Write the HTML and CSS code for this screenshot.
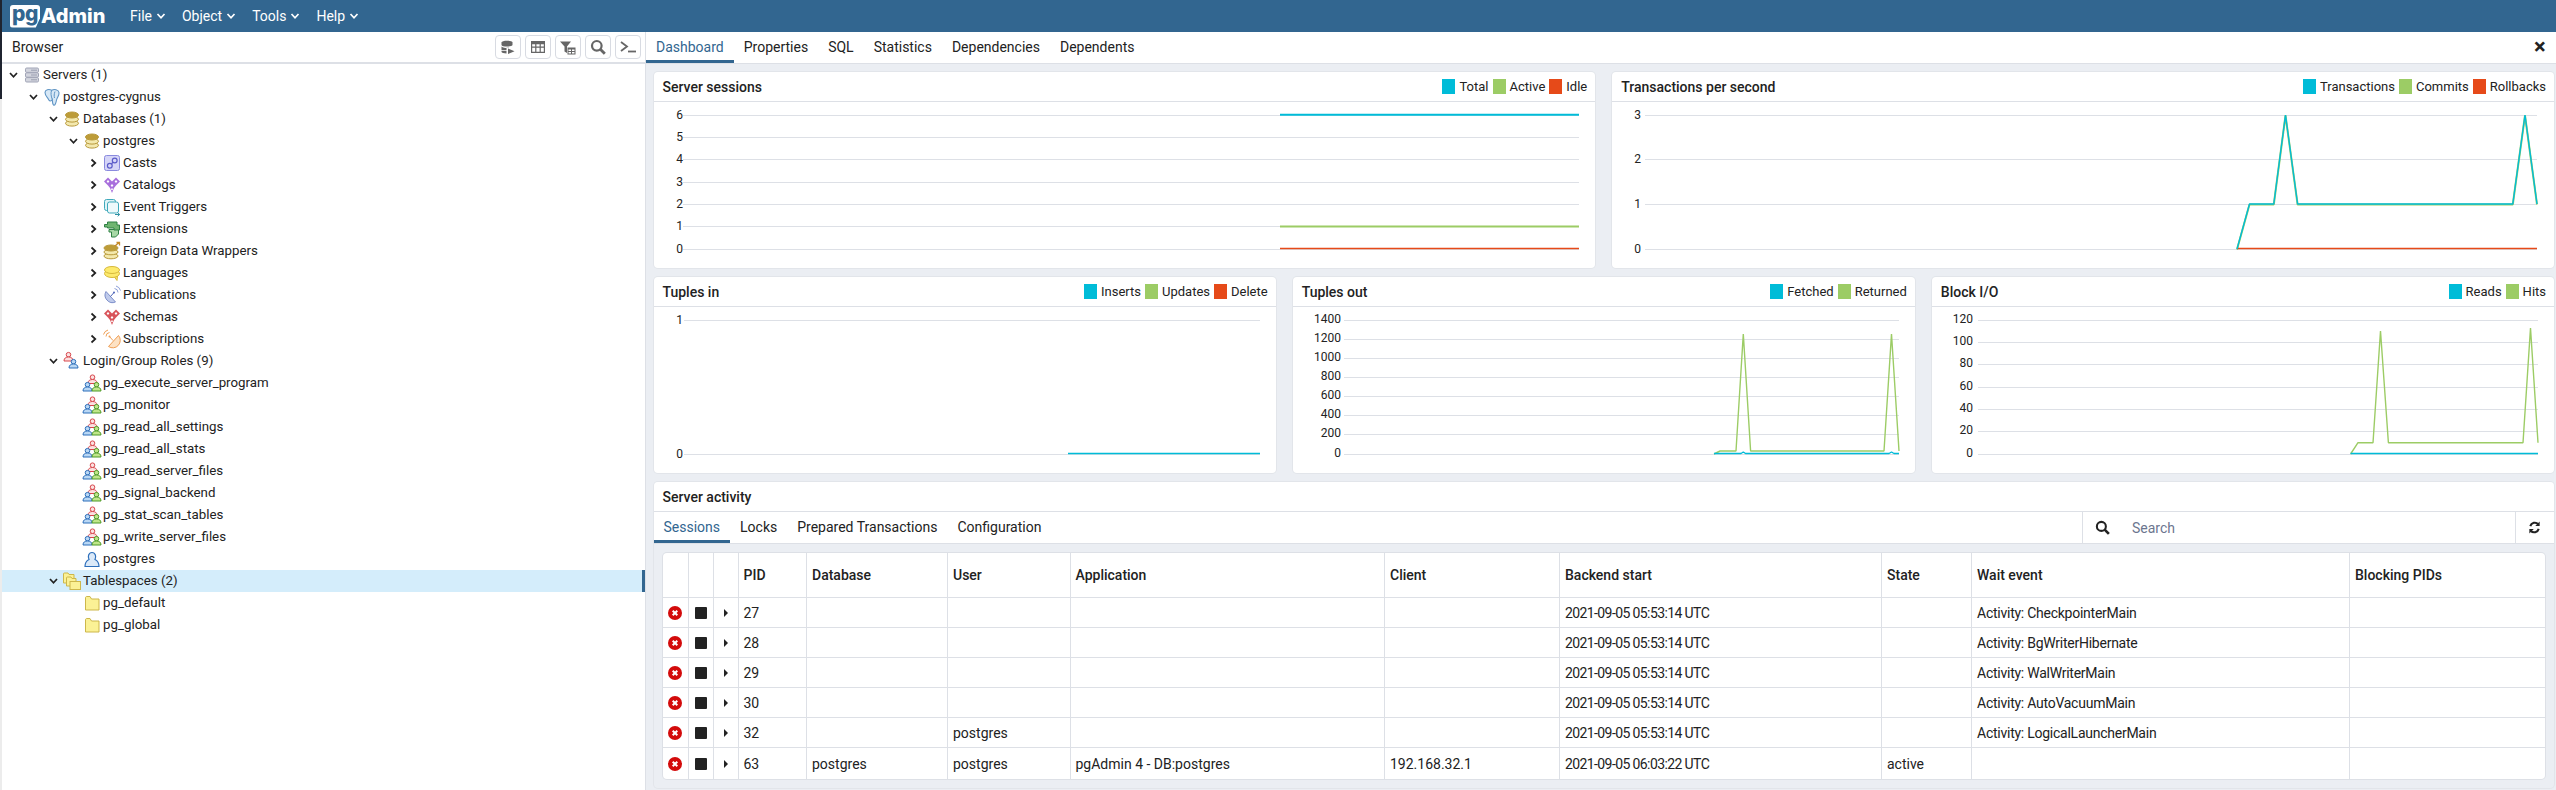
FILE: index.html
```html
<!DOCTYPE html>
<html lang="en">
<head>
<meta charset="utf-8">
<title>pgAdmin 4</title>
<link rel="stylesheet" href="styles.css">
</head>
<body>
<svg class="defs" aria-hidden="true">
  <symbol id="chev-d" viewBox="0 0 10 10"><path d="M1.5 3 5 6.8 8.5 3" fill="none" stroke="currentColor" stroke-width="1.7"/></symbol>
  <symbol id="chev-r" viewBox="0 0 10 10"><path d="M3 1.5 6.8 5 3 8.5" fill="none" stroke="currentColor" stroke-width="1.7"/></symbol>
  <symbol id="servers" viewBox="0 0 20 20"><g fill="#d3d5de" stroke="#a0a4b6"><rect x="3.5" y="3" width="13" height="4.4" rx="1.2"/><rect x="3.5" y="7.8" width="13" height="4.4" rx="1.2"/><rect x="3.5" y="12.6" width="13" height="4.4" rx="1.2"/></g><path d="M9 5.2h6M9 10h6M9 14.8h6" stroke="#9a9eb0"/></symbol>
  <symbol id="pg" viewBox="0 0 20 20"><path d="M3 5.5C3 2.5 7 2 9.7 3.2 12 2 16.500 2.300 17 5.500 17.400 8.500 15 10.500 14.500 13 14 16 13 18.700 11.500 18 10.300 17.300 10.500 14 10.300 12.500 8.700 15 7 14 6 11.500 4.500 9.500 3 8 3 5.500Z" fill="#d7e8f6" stroke="#5f94c4" stroke-width="1.100"/><path d="M9.700 3.200C8.500 6 9 9 10.300 12.500M13 4.500C12 7 12 9 12.500 11" fill="none" stroke="#5f94c4"/></symbol>
  <symbol id="db" viewBox="0 0 20 20"><g stroke="#b99a3c"><ellipse cx="10" cy="14.300" rx="6.500" ry="2.800" fill="#f3e8ad"/><ellipse cx="10" cy="10.300" rx="6.500" ry="2.800" fill="#f3e8ad"/><ellipse cx="10" cy="6" rx="6.500" ry="3" fill="#bd9c38"/></g></symbol>
  <symbol id="casts" viewBox="0 0 20 20"><rect x="2.500" y="2.500" width="15" height="15" rx="2" fill="#d5d5f7" stroke="#8a8ade"/><g fill="none" stroke="#5c5cc9" stroke-width="1.200"><circle cx="12.700" cy="7.500" r="2.400"/><circle cx="7.800" cy="12.700" r="2.400"/><path d="M9.500 11 11 9.200"/></g></symbol>
  <symbol id="heart" viewBox="0 0 20 20"><path d="M2 6.500 6 2.500l4 4 4-4 4 4-4 4-2 2.500-2 5-2-5-2-2.500Z"/><path d="M6 5.100 7.400 6.500 6 7.900 4.600 6.500ZM14 5.100 15.400 6.500 14 7.900 12.600 6.500ZM10 9.100l1.400 1.400L10 11.900 8.600 10.500ZM10 13.100l1.100 1.200L10 15.500 8.900 14.300Z" fill="#fff"/></symbol>
  <symbol id="trigger" viewBox="0 0 20 20"><rect x="2.500" y="2.500" width="11" height="11" rx="2" fill="#dff3f6" stroke="#3fa9bb"/><rect x="5.500" y="5" width="11" height="11" rx="2" fill="#eef9fb" stroke="#3fa9bb"/><path d="M13 17.500h4.500M15.700 15.700l2 1.800-2 1.800" fill="none" stroke="#2d8fa3"/></symbol>
  <symbol id="ext" viewBox="0 0 20 20"><path d="M7 10.500h9.500V15l-3 3H9.500v-5H7Z" fill="#a7d8a6" stroke="#2f8044"/><path d="M5.500 3h9.500v3h2.500v5H12V9H5.500V8H2.500V5.500H5.500Z" fill="#6fb571" stroke="#2f8044"/></symbol>
  <symbol id="fdw" viewBox="0 0 20 20"><g stroke="#b99a3c"><ellipse cx="9" cy="15" rx="7" ry="2.800" fill="#f3e8ad"/><ellipse cx="9" cy="11" rx="7" ry="2.800" fill="#f3e8ad"/><ellipse cx="9" cy="7" rx="7" ry="3" fill="#bd9c38"/></g><path d="M13 5 17 1.500M14.500 1.500H17.500V4.500" fill="none" stroke="#c58b2a" stroke-width="1.300"/></symbol>
  <symbol id="lang" viewBox="0 0 20 20"><g fill="#fdea6c" stroke="#d7b93c"><path d="M12 13.500 15 17.500 15.500 13Z"/><ellipse cx="10" cy="10.500" rx="7.500" ry="4"/><ellipse cx="10" cy="7" rx="7.500" ry="3.500"/></g></symbol>
  <symbol id="pub" viewBox="0 0 20 20"><path d="M4 6.500A7.500 7.500 0 0 0 13.500 17Z" fill="#c0cbeb" stroke="#7d8fca"/><path d="M8.500 11.500 12 7.500" stroke="#4f66b8"/><circle cx="12" cy="7.500" r="1" fill="#4f66b8"/><path d="M12.500 3.500a4 4 0 0 1 3.500 4M14 1a6.500 6.500 0 0 1 4.500 4.500" fill="none" stroke="#8ea0d8"/></symbol>
  <symbol id="sub" viewBox="0 0 20 20"><path d="M16.500 6.500A7.500 7.500 0 0 1 6.500 17.500Z" fill="#fde2c4" stroke="#ef9f55"/><path d="M11 11.500 7.500 7.500" stroke="#ef9f55"/><circle cx="7.500" cy="7.500" r="1" fill="#ef9f55"/><path d="M7.500 3.500a4 4 0 0 0-3.500 4M6 1a6.500 6.500 0 0 0-4.500 4.500" fill="none" stroke="#ef9f55"/></symbol>
  <g id="person"><circle cx="0" cy="-3.800" r="2.300"/><path d="M-4.500 2.500C-4.500-.5-2.500-1.500 0-1.500S4.500-.5 4.500 2.500Z"/></g>
  <symbol id="login" viewBox="0 0 20 20"><use href="#person" x="6.500" y="7.500" fill="#fbe0e0" stroke="#d8474c"/><use href="#person" x="11.500" y="14.500" fill="#b9d7f4" stroke="#2d6fbb"/></symbol>
  <symbol id="role" viewBox="0 0 20 20"><use href="#person" x="10.500" y="8" fill="#fbe0e0" stroke="#d8474c"/><use href="#person" x="5.500" y="15.500" fill="#b9d7f4" stroke="#2d6fbb"/><use href="#person" x="14.500" y="15.500" fill="#bfe58a" stroke="#4d9a26"/></symbol>
  <symbol id="user" viewBox="0 0 20 20"><path d="M3 17.500C3 12.500 6 11 7 10.500 5.500 8 6.500 3.500 10 3.500S14.500 8 13 10.500C14 11 17 12.500 17 17.500Z" fill="#dbe9f8" stroke="#2d6fbb" stroke-width="1.200"/></symbol>
  <symbol id="folder" viewBox="0 0 20 20"><path d="M3.500 5c0-1 .5-1.500 1-1.500H8L9.500 6h7.500V17H3.500Z" fill="#fbf195" stroke="#cdb74b"/></symbol>
  <symbol id="folders" viewBox="0 0 20 20"><path d="M1.500 3c0-.8.400-1 1-1H6L7 3.500h5V12H1.500Z" fill="#fbf195" stroke="#cdb74b"/><path d="M4.500 7c0-.8.400-1 1-1H9l1 1.500h4V15H4.500Z" fill="#fbf195" stroke="#cdb74b"/><rect x="8" y="10.500" width="10.500" height="8" fill="#fbf195" stroke="#cdb74b"/></symbol>
  <symbol id="t-db" viewBox="0 0 16 16"><path d="M1.500 3.500C1.500 1 12.500 1 12.500 3.500V6C12.500 8 1.500 8 1.500 6Z"/><path d="M1.500 7.500C3 9 8 9.200 10 8.800H6.500V11H1.500ZM1.500 11.800H6.500V14.500C4 14.500 1.500 14 1.500 12.800Z"/><path d="M8 9.500 14.500 12.200 8 15Z"/></symbol>
  <symbol id="t-grid" viewBox="0 0 16 16"><path d="M1 2h14v12H1Zm1.200 3.200v2.400h3V5.200Zm4.200 0v2.400h3.200V5.200Zm4.400 0v2.400h3V5.200ZM2.200 8.800v3.900h3V8.800Zm4.200 0v3.900h3.200V8.800Zm4.400 0v3.900h3V8.800Z" fill-rule="evenodd"/></symbol>
  <symbol id="t-filter" viewBox="0 0 16 16"><path d="M0 2.500h11L7 7.500V14L4.500 12.500V7.500Z"/><path d="M7.500 8.500h8v7h-8Zm1 2v1.500h2.500v-1.500Zm3.500 0v1.500h2.500v-1.500ZM8.500 13v1.500h2.500V13ZM12 13v1.500h2.500V13Z" fill-rule="evenodd"/></symbol>
  <symbol id="search" viewBox="0 0 16 16"><circle cx="6.800" cy="6.800" r="4.800" fill="none" stroke="currentColor" stroke-width="2.200"/><path d="M10.300 10.300 14.800 14.800" stroke="currentColor" stroke-width="2.800"/></symbol>
  <symbol id="t-term" viewBox="0 0 16 16"><path d="M1 3 7 7.500 1 12" fill="none" stroke="currentColor" stroke-width="1.800"/><path d="M8 12.500h8" stroke="currentColor" stroke-width="1.800"/></symbol>
  <symbol id="refresh" viewBox="0 0 16 16"><path d="M3.500 6.500A5 5 0 0 1 12 4.500M12.500 9.500A5 5 0 0 1 4 11.500" fill="none" stroke="currentColor" stroke-width="2.200"/><path d="M13.500 1.500V6.500H8.800ZM2.500 14.500V9.500H7.200Z" fill="currentColor"/></symbol>
  <symbol id="kill" viewBox="0 0 14 14"><circle cx="7" cy="7" r="7" fill="#d30b0b"/><path d="M4.700 4.700 9.300 9.300M9.300 4.700 4.700 9.300" stroke="#fff" stroke-width="2"/></symbol>
</svg>

<div class="app">
  <div class="edge"></div>
  <div class="shell">
    <header class="navbar">
      <div class="logo"><span class="logo-pg">pg</span><span class="logo-admin">Admin</span></div>
      <nav class="menu">
        <span class="menu-item">File <svg class="menu-chev"><use href="#chev-d"/></svg></span>
        <span class="menu-item">Object <svg class="menu-chev"><use href="#chev-d"/></svg></span>
        <span class="menu-item">Tools <svg class="menu-chev"><use href="#chev-d"/></svg></span>
        <span class="menu-item">Help <svg class="menu-chev"><use href="#chev-d"/></svg></span>
      </nav>
    </header>

    <div class="workspace">
      <aside class="browser">
        <div class="browser-head">
          <span class="browser-title">Browser</span>
          <div class="tools">
            <button class="tool"><svg class="tool-ic"><use href="#t-db"/></svg></button>
            <button class="tool"><svg class="tool-ic"><use href="#t-grid"/></svg></button>
            <button class="tool"><svg class="tool-ic"><use href="#t-filter"/></svg></button>
            <button class="tool"><svg class="tool-ic"><use href="#search"/></svg></button>
            <button class="tool"><svg class="tool-ic"><use href="#t-term"/></svg></button>
          </div>
        </div>
        <ul class="tree">
          <li class="node l0"><svg class="tw"><use href="#chev-d"/></svg><svg class="ic"><use href="#servers"/></svg><span>Servers (1)</span></li>
          <li class="node l1"><svg class="tw"><use href="#chev-d"/></svg><svg class="ic"><use href="#pg"/></svg><span>postgres-cygnus</span></li>
          <li class="node l2"><svg class="tw"><use href="#chev-d"/></svg><svg class="ic"><use href="#db"/></svg><span>Databases (1)</span></li>
          <li class="node l3"><svg class="tw"><use href="#chev-d"/></svg><svg class="ic"><use href="#db"/></svg><span>postgres</span></li>
          <li class="node l4"><svg class="tw"><use href="#chev-r"/></svg><svg class="ic"><use href="#casts"/></svg><span>Casts</span></li>
          <li class="node l4"><svg class="tw"><use href="#chev-r"/></svg><svg class="ic ic-purple"><use href="#heart"/></svg><span>Catalogs</span></li>
          <li class="node l4"><svg class="tw"><use href="#chev-r"/></svg><svg class="ic"><use href="#trigger"/></svg><span>Event Triggers</span></li>
          <li class="node l4"><svg class="tw"><use href="#chev-r"/></svg><svg class="ic"><use href="#ext"/></svg><span>Extensions</span></li>
          <li class="node l4"><svg class="tw"><use href="#chev-r"/></svg><svg class="ic"><use href="#fdw"/></svg><span>Foreign Data Wrappers</span></li>
          <li class="node l4"><svg class="tw"><use href="#chev-r"/></svg><svg class="ic"><use href="#lang"/></svg><span>Languages</span></li>
          <li class="node l4"><svg class="tw"><use href="#chev-r"/></svg><svg class="ic"><use href="#pub"/></svg><span>Publications</span></li>
          <li class="node l4"><svg class="tw"><use href="#chev-r"/></svg><svg class="ic ic-red"><use href="#heart"/></svg><span>Schemas</span></li>
          <li class="node l4"><svg class="tw"><use href="#chev-r"/></svg><svg class="ic"><use href="#sub"/></svg><span>Subscriptions</span></li>
          <li class="node l2"><svg class="tw"><use href="#chev-d"/></svg><svg class="ic"><use href="#login"/></svg><span>Login/Group Roles (9)</span></li>
          <li class="node l3"><span class="tw"></span><svg class="ic"><use href="#role"/></svg><span>pg_execute_server_program</span></li>
          <li class="node l3"><span class="tw"></span><svg class="ic"><use href="#role"/></svg><span>pg_monitor</span></li>
          <li class="node l3"><span class="tw"></span><svg class="ic"><use href="#role"/></svg><span>pg_read_all_settings</span></li>
          <li class="node l3"><span class="tw"></span><svg class="ic"><use href="#role"/></svg><span>pg_read_all_stats</span></li>
          <li class="node l3"><span class="tw"></span><svg class="ic"><use href="#role"/></svg><span>pg_read_server_files</span></li>
          <li class="node l3"><span class="tw"></span><svg class="ic"><use href="#role"/></svg><span>pg_signal_backend</span></li>
          <li class="node l3"><span class="tw"></span><svg class="ic"><use href="#role"/></svg><span>pg_stat_scan_tables</span></li>
          <li class="node l3"><span class="tw"></span><svg class="ic"><use href="#role"/></svg><span>pg_write_server_files</span></li>
          <li class="node l3"><span class="tw"></span><svg class="ic"><use href="#user"/></svg><span>postgres</span></li>
          <li class="node l2 selected"><svg class="tw"><use href="#chev-d"/></svg><svg class="ic"><use href="#folders"/></svg><span>Tablespaces (2)</span></li>
          <li class="node l3"><span class="tw"></span><svg class="ic"><use href="#folder"/></svg><span>pg_default</span></li>
          <li class="node l3"><span class="tw"></span><svg class="ic"><use href="#folder"/></svg><span>pg_global</span></li>
        </ul>
      </aside>

      <main class="main">
        <div class="main-tabs">
          <span class="tab active">Dashboard</span>
          <span class="tab">Properties</span>
          <span class="tab">SQL</span>
          <span class="tab">Statistics</span>
          <span class="tab">Dependencies</span>
          <span class="tab">Dependents</span>
          <span class="close">×</span>
        </div>
        <div class="dashboard">
          <div class="chart-row">
            <section class="card">
              <div class="card-head"><h2 class="card-title">Server sessions</h2>
                <div class="legend"><span class="key"><i class="sw teal"></i>Total</span><span class="key"><i class="sw green"></i>Active</span><span class="key"><i class="sw red"></i>Idle</span></div></div>
              <svg class="plot" viewBox="654 102 941.5 165" preserveAspectRatio="xMinYMin">
                <path class="grid" d="M683 115.500H1579M683 137.500H1579M683 159.500H1579M683 182.500H1579M683 204.500H1579M683 226.500H1579M683 249.500H1579"/>
                <g class="ticks"><text x="683" y="119">6</text><text x="683" y="141">5</text><text x="683" y="163">4</text><text x="683" y="186">3</text><text x="683" y="208">2</text><text x="683" y="230">1</text><text x="683" y="253">0</text></g>
                <path class="ln-t" d="M1280 114.800H1579"/><path class="ln-g" d="M1280 226.500H1579"/><path class="ln-r thin" d="M1280 248.500H1579"/>
              </svg>
            </section>
            <section class="card">
              <div class="card-head"><h2 class="card-title">Transactions per second</h2>
                <div class="legend"><span class="key"><i class="sw teal"></i>Transactions</span><span class="key"><i class="sw green"></i>Commits</span><span class="key"><i class="sw red"></i>Rollbacks</span></div></div>
              <svg class="plot" viewBox="1612 102 941.5 165" preserveAspectRatio="xMinYMin">
                <path class="grid" d="M1645 115.500H2537M1645 159.500H2537M1645 204.500H2537M1645 249.500H2537"/>
                <g class="ticks"><text x="1641" y="119">3</text><text x="1641" y="163">2</text><text x="1641" y="208">1</text><text x="1641" y="253">0</text></g>
                <path class="ln-g" d="M2237 249.500 2249.500 204.500H2273.800L2285.500 115.500 2297.600 204.500H2512.800L2525 115.500 2537 204.500"/>
                <path class="ln-r thin" d="M2237 248.500H2537"/>
                <path class="ln-t thin" d="M2237 249 2249.500 204H2273.800L2285.500 115 2297.600 204H2512.800L2525 115 2537 204"/>
              </svg>
            </section>
          </div>
          <div class="chart-row">
            <section class="card">
              <div class="card-head"><h2 class="card-title">Tuples in</h2>
                <div class="legend"><span class="key"><i class="sw teal"></i>Inserts</span><span class="key"><i class="sw green"></i>Updates</span><span class="key"><i class="sw red"></i>Delete</span></div></div>
              <svg class="plot" viewBox="654 306 622 165" preserveAspectRatio="xMinYMin">
                <path class="grid" d="M684 319.500H1260M684 453.500H1260"/>
                <g class="ticks"><text x="683" y="323">1</text><text x="683" y="457">0</text></g>
                <path class="ln-t thin" d="M1068 452.500H1260"/>
              </svg>
            </section>
            <section class="card">
              <div class="card-head"><h2 class="card-title">Tuples out</h2>
                <div class="legend"><span class="key"><i class="sw teal"></i>Fetched</span><span class="key"><i class="sw green"></i>Returned</span></div></div>
              <svg class="plot" viewBox="1293 306 622 165" preserveAspectRatio="xMinYMin">
                <path class="grid" d="M1344 319.500H1899M1344 338.500H1899M1344 357.500H1899M1344 376.500H1899M1344 395.500H1899M1344 414.500H1899M1344 433.500H1899M1344 453.500H1899"/>
                <g class="ticks"><text x="1341" y="322">1400</text><text x="1341" y="341">1200</text><text x="1341" y="360">1000</text><text x="1341" y="379">800</text><text x="1341" y="398">600</text><text x="1341" y="417">400</text><text x="1341" y="436">200</text><text x="1341" y="456">0</text></g>
                <path class="ln-g thin" d="M1714 453 1720 450H1736L1743.300 333 1750.600 450H1884L1891.500 333 1899 450"/>
                <path class="ln-t thin" d="M1714 452.500H1741L1743.300 451 1745.500 452.500H1889L1891.500 451 1894 452.500H1899"/>
              </svg>
            </section>
            <section class="card">
              <div class="card-head"><h2 class="card-title">Block I/O</h2>
                <div class="legend"><span class="key"><i class="sw teal"></i>Reads</span><span class="key"><i class="sw green"></i>Hits</span></div></div>
              <svg class="plot" viewBox="1932 306 622 165" preserveAspectRatio="xMinYMin">
                <path class="grid" d="M1978 319.500H2538M1978 341.500H2538M1978 363.500H2538M1978 386.500H2538M1978 408.500H2538M1978 430.500H2538M1978 453.500H2538"/>
                <g class="ticks"><text x="1973" y="322">120</text><text x="1973" y="344">100</text><text x="1973" y="366">80</text><text x="1973" y="389">60</text><text x="1973" y="411">40</text><text x="1973" y="433">20</text><text x="1973" y="456">0</text></g>
                <path class="ln-g thin" d="M2350.600 453 2358 441.700H2373L2380.500 330 2388.400 441.700H2523L2530.500 327 2538 441.700"/>
                <path class="ln-t thin" d="M2350.600 452.500H2538"/>
              </svg>
            </section>
          </div>
          <section class="activity">
            <div class="card-head"><h2 class="card-title">Server activity</h2></div>
            <div class="activity-bar">
              <span class="tab active">Sessions</span>
              <span class="tab">Locks</span>
              <span class="tab">Prepared Transactions</span>
              <span class="tab">Configuration</span>
              <label class="search"><svg class="search-ic"><use href="#search"/></svg><input class="search-input" placeholder="Search"></label>
              <span class="refresh"><svg class="search-ic"><use href="#refresh"/></svg></span>
            </div>
            <div class="table-wrap">
              <table class="sessions">
                <colgroup><col class="c-a"><col class="c-b"><col class="c-b"><col class="c-pid"><col class="c-db"><col class="c-user"><col class="c-app"><col class="c-client"><col class="c-start"><col class="c-state"><col class="c-wait"><col class="c-block"></colgroup>
                <thead><tr><th></th><th></th><th></th><th>PID</th><th>Database</th><th>User</th><th>Application</th><th>Client</th><th>Backend start</th><th>State</th><th>Wait event</th><th>Blocking PIDs</th></tr></thead>
                <tbody>
                  <tr><td class="act"><svg class="kill"><use href="#kill"/></svg></td><td class="act"><i class="stop"></i></td><td class="act"><i class="caret"></i></td><td>27</td><td></td><td></td><td></td><td></td><td class="ts">2021-09-05 05:53:14 UTC</td><td></td><td class="we">Activity: CheckpointerMain</td><td></td></tr>
                  <tr><td class="act"><svg class="kill"><use href="#kill"/></svg></td><td class="act"><i class="stop"></i></td><td class="act"><i class="caret"></i></td><td>28</td><td></td><td></td><td></td><td></td><td class="ts">2021-09-05 05:53:14 UTC</td><td></td><td class="we">Activity: BgWriterHibernate</td><td></td></tr>
                  <tr><td class="act"><svg class="kill"><use href="#kill"/></svg></td><td class="act"><i class="stop"></i></td><td class="act"><i class="caret"></i></td><td>29</td><td></td><td></td><td></td><td></td><td class="ts">2021-09-05 05:53:14 UTC</td><td></td><td class="we">Activity: WalWriterMain</td><td></td></tr>
                  <tr><td class="act"><svg class="kill"><use href="#kill"/></svg></td><td class="act"><i class="stop"></i></td><td class="act"><i class="caret"></i></td><td>30</td><td></td><td></td><td></td><td></td><td class="ts">2021-09-05 05:53:14 UTC</td><td></td><td class="we">Activity: AutoVacuumMain</td><td></td></tr>
                  <tr><td class="act"><svg class="kill"><use href="#kill"/></svg></td><td class="act"><i class="stop"></i></td><td class="act"><i class="caret"></i></td><td>32</td><td></td><td>postgres</td><td></td><td></td><td class="ts">2021-09-05 05:53:14 UTC</td><td></td><td class="we">Activity: LogicalLauncherMain</td><td></td></tr>
                  <tr><td class="act"><svg class="kill"><use href="#kill"/></svg></td><td class="act"><i class="stop"></i></td><td class="act"><i class="caret"></i></td><td>63</td><td>postgres</td><td>postgres</td><td>pgAdmin 4 - DB:postgres</td><td>192.168.32.1</td><td class="ts">2021-09-05 06:03:22 UTC</td><td>active</td><td></td><td></td></tr>
                </tbody>
              </table>
            </div>
          </section>
        </div>
      </main>
    </div>
  </div>
</div>
</body>
</html>
```

FILE: styles.css
```css
* { box-sizing: border-box; }
html, body { margin: 0; height: 100%; overflow: hidden; }
body { font: 14px/20px Roboto, "Liberation Sans", sans-serif; color: #222; background: #fff; }
.defs { position: absolute; width: 0; height: 0; }

.app { display: flex; height: 790px; }
.edge { width: 2px; flex: none; background: linear-gradient(#1f2430 99px, #ececec 99px); }
.shell { flex: 1; min-width: 0; display: flex; flex-direction: column; }

.navbar { height: 32px; flex: none; background: #326690; color: #fff; display: flex; align-items: center; padding-left: 8px; }
.logo { display: flex; align-items: center; width: 120px; height: 32px; }
.logo-pg { width: 30px; height: 23px; background: #fff; color: #326690; font: 800 21px/18px Inter, sans-serif; text-align: center; letter-spacing: -.5px; border-radius: 3px; clip-path: polygon(0 0, 100% 0, 100% 60%, 86% 100%, 0 100%); }
.logo-admin { font: 800 20px/24px Inter, sans-serif; margin-left: 1px; }
.menu { display: flex; gap: 16px; }
.menu-item { display: flex; align-items: center; gap: 4px; }
.menu-chev { width: 10px; height: 10px; color: #fff; }

.workspace { flex: 1; min-height: 0; display: flex; }
.browser { width: 644px; flex: none; border-right: 1px solid #dde0e6; }
.browser-head { height: 32px; display: flex; align-items: center; justify-content: space-between; padding: 0 4px 0 10px; border-bottom: 2px solid #dde0e6; }
.browser-title { line-height: 30px; }
.tools { display: flex; gap: 4px; }
.tool { width: 26px; height: 24px; padding: 0; background: #fff; border: 1px solid #d8dbe2; border-radius: 4px; color: #666; fill: #666; display: flex; align-items: center; justify-content: center; }
.tool-ic { width: 16px; height: 16px; }

.tree { list-style: none; margin: 0; padding: 0; font-size: 13.300px; }
.node { height: 22px; display: flex; align-items: center; white-space: nowrap; }
.l0 { padding-left: 3px; }
.l1 { padding-left: 23px; }
.l2 { padding-left: 43px; }
.l3 { padding-left: 63px; }
.l4 { padding-left: 83px; }
.tw { width: 17px; height: 10px; flex: none; color: #222; }
.ic { width: 20px; height: 20px; flex: none; margin-right: 1px; }
.ic-purple { fill: #a86fdc; }
.ic-red { fill: #d9545a; }
.selected { background: #d4edfb; border-right: 3px solid #326690; }

.main { flex: 1; min-width: 0; display: flex; flex-direction: column; }
.main-tabs { height: 32px; flex: none; display: flex; border-bottom: 1px solid #dde0e6; position: relative; }
.tab { height: 31px; padding: 0 10px; line-height: 30px; flex: none; }
.tab.active { color: #326690; border-bottom: 3px solid #326690; }
.close { margin-left: auto; width: 22px; font-size: 22px; font-weight: 700; line-height: 30px; }

.dashboard { flex: 1; min-height: 0; background: #ebeef3; padding: 8px 2px 2px 7.500px; display: flex; flex-direction: column; gap: 9px; }
.chart-row { display: flex; gap: 17px; height: 196px; flex: none; }
.card { flex: 1 1 0; min-width: 0; background: #fff; border-radius: 4px; box-shadow: 0 0 0 1px #e2e5ea; overflow: hidden; }
.card-head { height: 30px; display: flex; align-items: center; justify-content: space-between; padding: 0 8px 0 9px; border-bottom: 1px solid #dde0e6; }
.card-title { margin: 0; font-size: 14px; font-weight: 500; line-height: 20px; }
.legend { display: flex; gap: 4px; font-size: 13px; }
.key { display: flex; align-items: center; gap: 4px; }
.sw { width: 13px; height: 15px; display: block; }
.teal { background: #00bcd8; }
.green { background: #9ccc65; }
.red { background: #e64a19; }

.plot { display: block; width: 100%; height: 165px; }
.grid { fill: none; stroke: #dde0e6; stroke-width: 1; }
.ticks text { font: 12px Roboto, sans-serif; fill: #222; text-anchor: end; }
.ln-t, .ln-g, .ln-r { fill: none; stroke-width: 2; stroke-linejoin: bevel; }
.ln-t.thin, .ln-g.thin, .ln-r.thin { stroke-width: 1.400; }
.ln-t { stroke: #00bcd8; }
.ln-g { stroke: #9ccc65; }
.ln-r { stroke: #e64a19; }

.activity { flex: 1; min-height: 0; background: #ebeef3; border-radius: 4px; box-shadow: 0 0 0 1px #e2e5ea; display: flex; flex-direction: column; }
.activity .card-head { background: #fff; border-radius: 4px 4px 0 0; }
.activity-bar { height: 32px; flex: none; background: #fff; display: flex; border-bottom: 1px solid #dde0e6; }
.search { margin-left: auto; width: 433px; display: flex; align-items: center; border-left: 1px solid #dde0e6; padding-left: 12px; }
.search-ic { width: 15px; height: 15px; flex: none; color: #222; }
.search-input { flex: 1; min-width: 0; border: 0; outline: 0; padding: 0 0 0 22px; font: 14px Roboto, sans-serif; }
.search-input::placeholder { color: #6c768f; }
.refresh { width: 39px; display: flex; align-items: center; justify-content: center; border-left: 1px solid #dde0e6; padding-right: 2px; }

.table-wrap { padding: 9px 9px 0; }
.sessions { width: 1882px; table-layout: fixed; border-collapse: separate; border-spacing: 0; background: #fff; border-radius: 4px; box-shadow: 0 0 0 1px #dde0e6; }
.sessions th, .sessions td { padding: 0 5px; text-align: left; border-right: 1px solid #dde0e6; border-bottom: 1px solid #dde0e6; white-space: nowrap; }
.sessions th:last-child, .sessions td:last-child { border-right: 0; }
.sessions tbody tr:last-child td { border-bottom: 0; height: 31px; }
.sessions th { height: 45px; font-weight: 500; }
.sessions td { height: 30px; }
.sessions td.act { padding: 0; text-align: center; line-height: 0; }
.sessions td.ts { letter-spacing: -.6px; }
.sessions td.we { letter-spacing: -.25px; }
.c-a { width: 26px; }
.c-b { width: 25px; }
.c-pid { width: 68.500px; }
.c-db { width: 141px; }
.c-user { width: 122.500px; }
.c-app { width: 314.500px; }
.c-client { width: 175px; }
.c-start { width: 322px; }
.c-state { width: 90px; }
.c-wait { width: 378px; }
.c-block { width: 195px; }
.kill { width: 14px; height: 14px; display: inline-block; vertical-align: middle; }
.stop { width: 12px; height: 12px; display: inline-block; background: #222; border-radius: 1px; vertical-align: middle; }
.caret { display: inline-block; width: 0; height: 0; border-left: 4px solid #222; border-top: 4px solid transparent; border-bottom: 4px solid transparent; vertical-align: middle; }
```
